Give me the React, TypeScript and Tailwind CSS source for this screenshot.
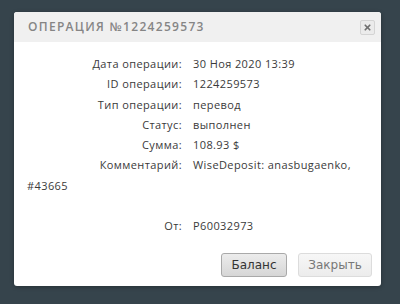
import { X } from "lucide-react";

const rows = [
  ["Дата операции:", "30 Ноя 2020 13:39"],
  ["ID операции:", "1224259573"],
  ["Тип операции:", "перевод"],
  ["Статус:", "выполнен"],
  ["Сумма:", "108.93 $"],
];

const App = () => {
  return (
    <div className="w-[400px] h-[304px] bg-[#36444c] pt-[12px] pl-[14px] overflow-hidden" style={{ fontFamily: '"Open Sans", "Noto Sans", sans-serif' }}>
      <div className="w-[367px] h-[274px] bg-white rounded-[3px] flex flex-col shadow-[0_1px_4px_rgba(0,0,0,0.3)]">
        <div className="h-[30px] bg-[#f0f0f0] rounded-t-[3px] flex items-center justify-between pl-[14px] pr-[6px]">
          <span className="text-[12px] font-semibold tracking-[1.3px] text-[#858585]">ОПЕРАЦИЯ №1224259573</span>
          <button className="w-[15px] h-[15px] rounded-[2px] border border-[#d4d4d4] bg-[#ebebeb] flex items-center justify-center">
            <X className="w-[9px] h-[9px] text-[#6f6f6f]" strokeWidth={4.5} />
          </button>
        </div>
        <div className="px-[13px] pt-[12px] text-[11px] leading-[20.25px] text-[#3a3a3a] tracking-[0.4px]">
          {rows.map(([label, value]) => (
            <div key={label}>
              <span className="inline-block w-[155px] text-right mr-[11px]">{label}</span>
              {value}
            </div>
          ))}
          <div>
            <span className="inline-block w-[155px] text-right mr-[11px]">Комментарий:</span>
            WiseDeposit: anasbugaenko, #43665
          </div>
          <div className="h-[20.25px]" />
          <div>
            <span className="inline-block w-[155px] text-right mr-[11px]">От:</span>
            P60032973
          </div>
        </div>
        <div className="mt-auto flex justify-end gap-[11px] pr-[9px] pb-[9px]">
          <button className="w-[66px] h-[24px] rounded-[3px] border border-[#a9a9a9] bg-gradient-to-b from-[#ececec] to-[#d6d6d6] text-[12px] text-[#333]" style={{ fontFamily: '"DejaVu Sans", sans-serif' }}>
            Баланс
          </button>
          <button className="w-[74px] h-[24px] rounded-[3px] border border-[#dcdcdc] bg-gradient-to-b from-[#f7f7f7] to-[#ececec] text-[12px] text-[#777]" style={{ fontFamily: '"DejaVu Sans", sans-serif' }}>
            Закрыть
          </button>
        </div>
      </div>
    </div>
  );
};

export default App;
